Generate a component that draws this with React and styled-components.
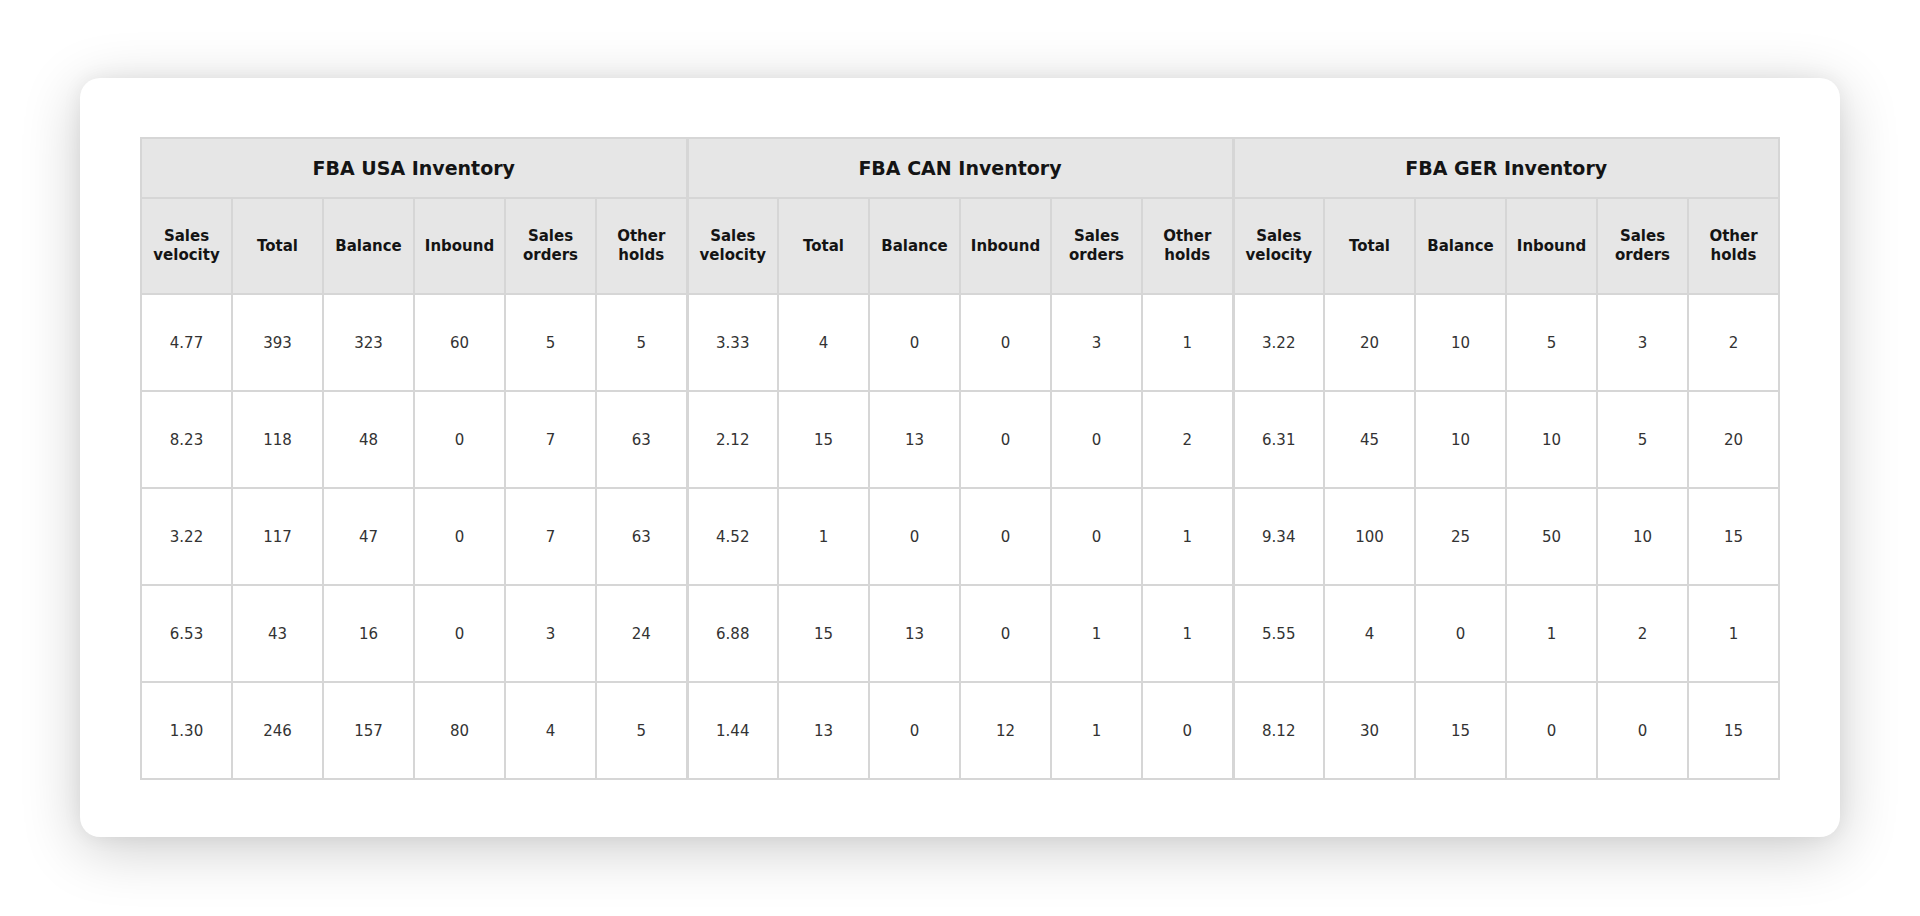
import React from 'react';
import styled, { createGlobalStyle } from 'styled-components';

const GlobalStyle = createGlobalStyle`
  html, body {
    margin: 0;
    padding: 0;
    background: #ffffff;
  }
  body {
    font-family: "DejaVu Sans", "Noto Sans", sans-serif;
  }
`;

const groups = [
  {
    name: 'FBA USA Inventory',
    rows: [
      ['4.77', '393', '323', '60', '5', '5'],
      ['8.23', '118', '48', '0', '7', '63'],
      ['3.22', '117', '47', '0', '7', '63'],
      ['6.53', '43', '16', '0', '3', '24'],
      ['1.30', '246', '157', '80', '4', '5'],
    ],
  },
  {
    name: 'FBA CAN Inventory',
    rows: [
      ['3.33', '4', '0', '0', '3', '1'],
      ['2.12', '15', '13', '0', '0', '2'],
      ['4.52', '1', '0', '0', '0', '1'],
      ['6.88', '15', '13', '0', '1', '1'],
      ['1.44', '13', '0', '12', '1', '0'],
    ],
  },
  {
    name: 'FBA GER Inventory',
    rows: [
      ['3.22', '20', '10', '5', '3', '2'],
      ['6.31', '45', '10', '10', '5', '20'],
      ['9.34', '100', '25', '50', '10', '15'],
      ['5.55', '4', '0', '1', '2', '1'],
      ['8.12', '30', '15', '0', '0', '15'],
    ],
  },
];

const columns = [
  ['Sales', 'velocity'],
  ['Total'],
  ['Balance'],
  ['Inbound'],
  ['Sales', 'orders'],
  ['Other', 'holds'],
];

const Page = styled.div`
  height: 916px;
  box-sizing: border-box;
  padding: 78px 80px 0;
`;

const Card = styled.div`
  width: 1760px;
  height: 759px;
  box-sizing: border-box;
  padding: 59px 60px;
  background: #ffffff;
  border-radius: 20px;
  box-shadow: 0 12px 60px rgba(0, 0, 0, 0.2), 0 0 20px rgba(0, 0, 0, 0.06);
`;

const Table = styled.table`
  width: 100%;
  border-collapse: collapse;
  table-layout: fixed;
  border: 2px solid #d6d6d6;
`;

const GroupHead = styled.th`
  height: 58px;
  padding: 0;
  background: #e6e6e6;
  border: 2px solid #d6d6d6;
  border-right-width: ${p => (p.$last ? 2 : 3)}px;
  font-size: 19px;
  font-weight: 700;
  color: #141414;
  text-align: center;
`;

const ColHead = styled.th`
  height: 94px;
  padding: 0 4px;
  background: #e6e6e6;
  border: 2px solid #d6d6d6;
  border-right-width: ${p => (p.$edge ? 3 : 2)}px;
  font-size: 15px;
  font-weight: 700;
  line-height: 19px;
  color: #141414;
  text-align: center;
`;

const Cell = styled.td`
  height: 95px;
  padding: 0;
  border: 2px solid #d6d6d6;
  border-right-width: ${p => (p.$edge ? 3 : 2)}px;
  font-size: 15px;
  color: #333333;
  text-align: center;
`;

const App = () => {
  return (
    <>
      <GlobalStyle />
      <Page>
        <Card>
          <Table>
            <thead>
              <tr>
                {groups.map((g, gi) => (
                  <GroupHead key={g.name} colSpan={6} $last={gi === groups.length - 1}>
                    {g.name}
                  </GroupHead>
                ))}
              </tr>
              <tr>
                {groups.map((g, gi) =>
                  columns.map((c, ci) => (
                    <ColHead key={g.name + ci} $edge={ci === 5 && gi < groups.length - 1}>
                      {c.map((line, li) => (
                        <React.Fragment key={li}>
                          {li > 0 && <br />}
                          {line}
                        </React.Fragment>
                      ))}
                    </ColHead>
                  ))
                )}
              </tr>
            </thead>
            <tbody>
              {[0, 1, 2, 3, 4].map(ri => (
                <tr key={ri}>
                  {groups.map((g, gi) =>
                    g.rows[ri].map((v, ci) => (
                      <Cell key={g.name + ci} $edge={ci === 5 && gi < groups.length - 1}>
                        {v}
                      </Cell>
                    ))
                  )}
                </tr>
              ))}
            </tbody>
          </Table>
        </Card>
      </Page>
    </>
  );
};

export default App;
